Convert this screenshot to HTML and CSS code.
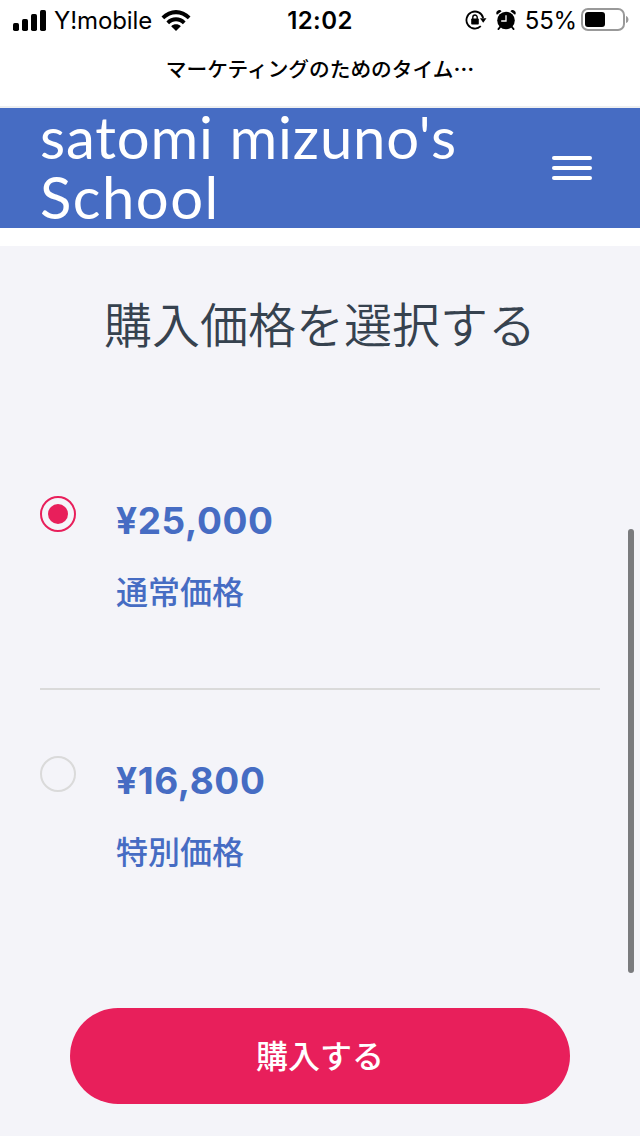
FILE: index.html
```html
<!DOCTYPE html>
<html lang="ja">
<head>
<meta charset="utf-8">
<meta name="viewport" content="width=device-width">
<title>購入価格を選択する</title>
<link rel="stylesheet" href="styles.css">
</head>
<body>
<div class="screen">
  <div class="status">
    <div class="status-left">
      <svg class="signal" width="33" height="21" viewBox="0 0 33 21"><rect x="0" y="13" width="6" height="8" rx="1.7"/><rect x="9" y="9" width="6" height="12" rx="1.7"/><rect x="18" y="4" width="6" height="17" rx="1.7"/><rect x="27" y="0" width="6" height="21" rx="1.7"/></svg>
      <span class="carrier">Y!mobile</span>
      <svg class="wifi" width="30" height="22" viewBox="0 0 30 22"><path d="M0.5 7.6C8.5-1.3 21.500-1.3 29.500 7.600L26.800 10.300C20.200 3.400 9.800 3.400 3.200 10.300Z"/><path d="M5.400 12.500C10.700 6.900 19.300 6.900 24.600 12.500L21.900 15.200C18.100 11.300 11.900 11.300 8.100 15.200Z"/><path d="M10.200 17.200C12.800 14.600 17.200 14.600 19.800 17.200L15 22Z"/></svg>
    </div>
    <span class="clock">12:02</span>
    <div class="status-right">
      <svg class="lock" width="22" height="20" viewBox="0 0 22 20"><path d="M18.200 8A8.500 8.500 0 1 0 15.800 16.200" fill="none" stroke="#000" stroke-width="1.800"/><path d="M15 8.200H21.500L18.200 12.800Z"/><rect x="6.200" y="8.500" width="7.600" height="6" rx=".8"/><path d="M7.800 9V7.200a2.200 2.200 0 0 1 4.400 0V9" fill="none" stroke="#000" stroke-width="1.400"/></svg>
      <svg class="alarm" width="20" height="20" viewBox="0 0 20 20"><circle cx="10" cy="10.500" r="8.800"/><path d="M4.500 16.500L2.500 19M15.500 16.500L17.500 19" stroke="#000" stroke-width="2" stroke-linecap="round"/><path d="M1 4.800A2.700 2.700 0 0 1 5.600 1.300ZM19 4.800A2.700 2.700 0 0 0 14.400 1.300Z"/><path d="M10 5.200V11H5.200" fill="none" stroke="#fff" stroke-width="1.300"/></svg>
      <span class="percent">55%</span>
      <svg class="battery" width="48" height="24" viewBox="0 0 48 24"><rect x="1" y="1" width="42" height="21" rx="6" fill="none" stroke="#999" stroke-width="2"/><rect x="4" y="4" width="20" height="15" rx="3"/><path d="M45 8C48.300 9 48.300 14 45 15Z" fill="#999"/></svg>
    </div>
  </div>
  <div class="page-title">マーケティングのためのタイム<span class="dots">⋯</span></div>
  <header class="header">
    <div class="brand"><span class="brand-first">satomi mizuno's</span><br><span class="brand-second">School</span></div>
    <div class="menu"><i></i><i></i><i></i></div>
  </header>
  <main class="content">
    <h1 class="heading">購入価格を選択する</h1>
    <section class="option">
      <span class="radio selected"></span>
      <div><div class="price">¥25,000</div><div class="label">通常価格</div></div>
    </section>
    <section class="option second">
      <span class="radio"></span>
      <div><div class="price special">¥16,800</div><div class="label">特別価格</div></div>
    </section>
    <button class="buy">購入する</button>
  </main>
  <div class="scrollbar"></div>
</div>
</body>
</html>
```

FILE: styles.css
```css
* { box-sizing: border-box; }
body { margin: 0; font-family: "Inter", "Noto Sans CJK JP", sans-serif; }
.screen { position: relative; width: 640px; height: 1136px; overflow: hidden; background: #fff; }
.status { display: grid; grid-template-columns: 1fr auto 1fr; align-items: center; height: 40px; padding: 0 11px 0 13px; color: #000; }
.status svg { flex: none; }
.status-left, .status-right { display: flex; align-items: center; white-space: nowrap; }
.status-right { justify-content: flex-end; }
.carrier { margin: 2px 9px 0 8px; font-size: 24px; line-height: 30px; letter-spacing: -.1px; }
.clock { padding-top: 2px; margin-left: -2px; font-size: 24px; line-height: 30px; font-weight: 600; letter-spacing: .4px; }
.alarm { margin-left: 9px; }
.percent { margin: 2px 4px 0 9px; font-size: 24px; line-height: 30px; letter-spacing: -.2px; }
.page-title { height: 68px; border-bottom: 2px solid #eeeff0; text-align: center; font: 500 20.700px/56px "Noto Sans CJK JP", sans-serif; white-space: nowrap; }
.dots { font-weight: 700; }
.header { display: flex; justify-content: space-between; align-items: center; height: 120px; padding: 0 48px 0 40px; background: #466cc3; color: #fff; }
.brand { margin-top: -3px; font: 400 58px/60px "Lato", sans-serif; white-space: nowrap; }
.brand-first { letter-spacing: .850px; }
.brand-second { letter-spacing: 1.500px; }
.menu { display: flex; flex-direction: column; gap: 6px; }
.menu i { width: 40px; height: 4px; border-radius: 2px; background: #fff; }
.content { height: 890px; margin-top: 18px; padding: 40px 40px 0; background: #f4f4f9; }
.heading { margin: 0 0 132px; text-align: center; color: #36424f; font: 350 48px/72px "Noto Sans CJK JP", "Noto Sans CJK JP DemiLight", sans-serif; }
.option { display: flex; gap: 40px; height: 200px; padding-top: 6px; color: #466cc3; border-bottom: 2px solid #dadada; }
.option.second { height: 260px; padding-top: 66px; border: 0; }
.radio { display: flex; justify-content: center; align-items: center; width: 36px; height: 36px; border: 2px solid #dadada; border-radius: 50%; }
.radio.selected { border-color: #e81f5b; }
.selected::after { content: ""; width: 20px; height: 20px; border-radius: 50%; background: #e81f5b; }
.price { font: 700 37px/50px "Inter", sans-serif; letter-spacing: .6px; }
.label { margin-top: 20px; font: 500 32px/48px "Noto Sans CJK JP", sans-serif; }
.buy { display: block; width: 500px; height: 96px; margin: 58px auto 0; padding: 0 0 4px; border: 0; border-radius: 48px; background: #e81f5b; color: #fff; font: 500 32px/92px "Noto Sans CJK JP", sans-serif; }
.scrollbar { position: absolute; top: 529px; left: 628px; width: 6px; height: 444px; border-radius: 3px; background: #7a7b7e; }
```
